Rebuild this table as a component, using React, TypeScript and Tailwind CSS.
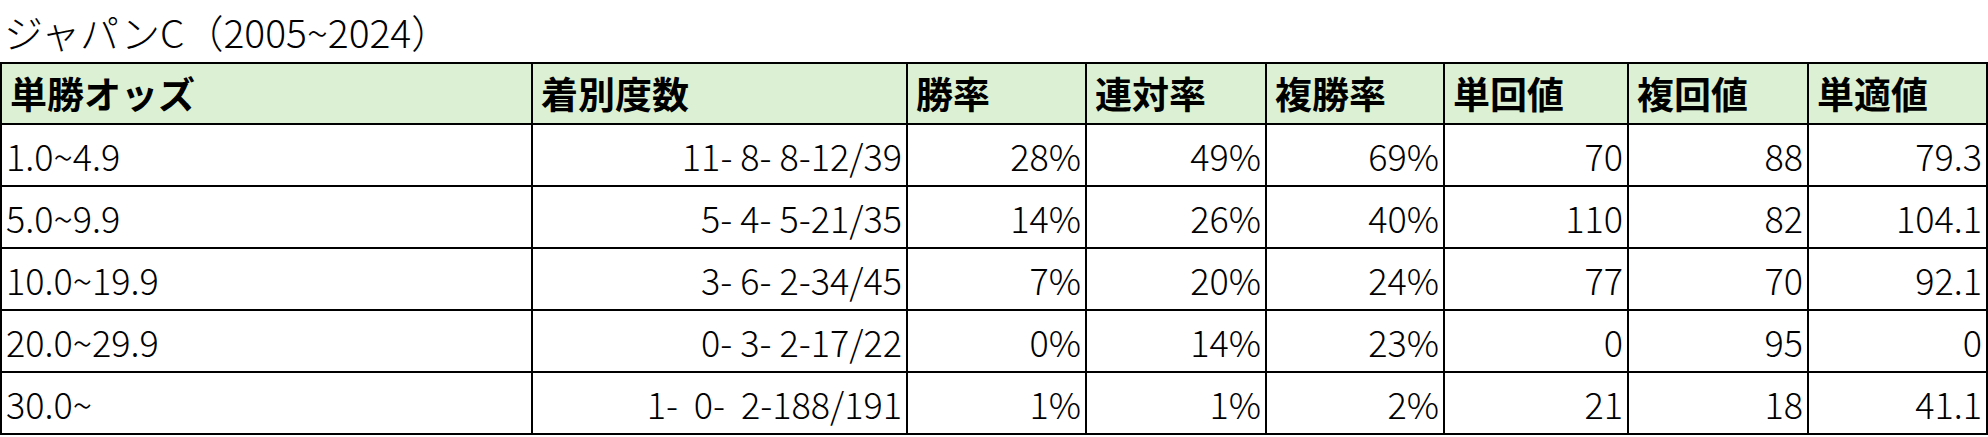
import React from "react";

const COLS = [
  { label: "単勝オッズ", w: "w-[531px]" },
  { label: "着別度数", w: "w-[375px]" },
  { label: "勝率", w: "w-[179px]" },
  { label: "連対率", w: "w-[180px]" },
  { label: "複勝率", w: "w-[178px]" },
  { label: "単回値", w: "w-[184px]" },
  { label: "複回値", w: "w-[180px]" },
  { label: "単適値", w: "w-[179px]" },
];

const ROWS = [
  ["1.0~4.9", "11- 8- 8-12/39", "28%", "49%", "69%", "70", "88", "79.3"],
  ["5.0~9.9", "5- 4- 5-21/35", "14%", "26%", "40%", "110", "82", "104.1"],
  ["10.0~19.9", "3- 6- 2-34/45", "7%", "20%", "24%", "77", "70", "92.1"],
  ["20.0~29.9", "0- 3- 2-17/22", "0%", "14%", "23%", "0", "95", "0"],
  ["30.0~", "1-  0-  2-188/191", "1%", "1%", "2%", "21", "18", "41.1"],
];

export default function App() {
  return (
    <div
      className="w-[1988px] h-[437px] bg-white text-black overflow-hidden"
      style={{ fontFamily: '"Noto Sans CJK JP", "Noto Sans", sans-serif' }}
    >
      <div className="h-[62px] flex items-center pl-1 text-[39px] font-light leading-none">
        ジャパンC（2005~2024）
      </div>
      <table className="table-fixed border-collapse w-[1986px] border-2 border-black">
        <colgroup>
          {COLS.map((c) => (
            <col key={c.label} className={c.w} />
          ))}
        </colgroup>
        <thead>
          <tr className="h-[61px] bg-[#dcf1d3]">
            {COLS.map((c) => (
              <th
                key={c.label}
                className="border-2 border-black px-2 text-left text-[37px] font-bold leading-none"
              >
                {c.label}
              </th>
            ))}
          </tr>
        </thead>
        <tbody>
          {ROWS.map((r) => (
            <tr key={r[0]} className="h-[62px]">
              {r.map((v, i) => (
                <td
                  key={i}
                  className={
                    i === 0
                      ? "border-2 border-black pl-1 text-left text-[36px] font-light leading-none"
                      : "border-2 border-black pr-1 text-right text-[36px] font-light leading-none whitespace-pre"
                  }
                >
                  {v}
                </td>
              ))}
            </tr>
          ))}
        </tbody>
      </table>
    </div>
  );
}
